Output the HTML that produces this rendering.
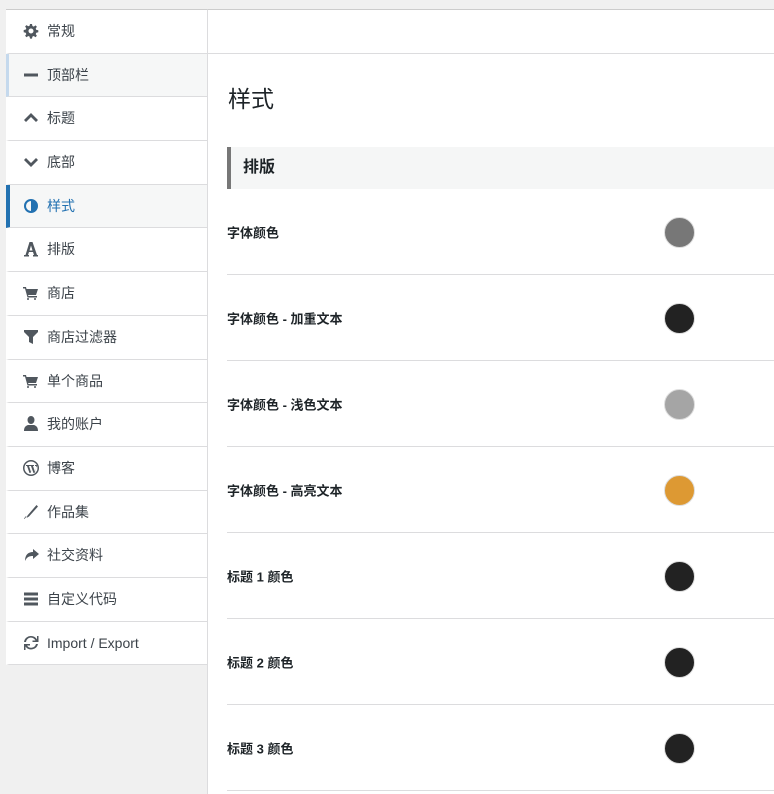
<!DOCTYPE html>
<html><head><meta charset="utf-8"><style>
*{box-sizing:border-box;margin:0;padding:0}
body{width:774px;height:794px;background:#f0f0f0;font-family:"Liberation Sans","Noto Sans CJK SC",sans-serif;position:relative;overflow:hidden}
#side{position:absolute;left:6px;top:9px;width:201px;border:1px solid #ccc;border-right:none;border-bottom:none;background:#f0f0f0}
.it{height:43.7px;background:#fff;border-bottom:1px solid #dcdcde;position:relative;font-size:14px;color:#3c434a;line-height:43px;padding-left:38px;border-left:3px solid transparent;margin-left:-1px}
.it svg{position:absolute;left:14px;top:13px;width:16px;height:16px;fill:#50575e}
.it.hov{background:#f6f7f7;border-left-color:#c5d9ed}
.it.act{background:#f6f7f7;border-left:4px solid #2271b1;color:#2271b1;padding-left:37px}
.it.act svg{fill:#2271b1;left:13px}
#main{position:absolute;left:207px;top:9px;width:567px;height:785px;background:#fff;border-left:1px solid #dcdcde;border-top:1px solid #ccc}
#top{height:44px;border-bottom:1px solid #dcdcde}
h1{font-weight:normal;font-size:23px;color:#1d2327;position:absolute;left:20px;top:70px}
#sec{position:absolute;left:19px;top:137px;right:0;height:42px;background:#f5f6f6;border-left:4px solid #777;font-size:16px;font-weight:bold;color:#1d2327;padding-left:12px;line-height:42px}
.row{position:absolute;left:19px;right:0;height:86px;border-bottom:1px solid #dcdcde;font-size:13px;font-weight:bold;color:#1d2327}
.row span{position:absolute;left:0;top:50%;transform:translateY(-50%)}
.row i{position:absolute;left:437px;top:50%;margin-top:-15px;width:31px;height:31px;border-radius:50%;border:1px solid #ddd}
</style></head><body>
<div id="side">
<div class="it"><svg viewBox="0 0 16 16"><path d="M7 1h2l.4 2 1.4.6 1.7-1.2 1.4 1.4-1.2 1.7.6 1.4 2 .4v2l-2 .4-.6 1.4 1.2 1.7-1.4 1.4-1.7-1.2-1.4.6-.4 2H7l-.4-2-1.4-.6-1.7 1.2-1.4-1.4 1.2-1.7-.6-1.4-2-.4V7l2-.4.6-1.4-1.2-1.7 1.4-1.4 1.7 1.2 1.4-.6zM8 5.5a2.5 2.5 0 100 5 2.5 2.5 0 000-5z"/></svg>常规</div>
<div class="it hov"><svg viewBox="0 0 16 16"><rect x="1" y="6.5" width="14" height="3"/></svg>顶部栏</div>
<div class="it"><svg viewBox="0 0 16 16"><path d="M8 3l7 7-2 2-5-5-5 5-2-2z"/></svg>标题</div>
<div class="it"><svg viewBox="0 0 16 16"><path d="M8 13l7-7-2-2-5 5-5-5-2 2z"/></svg>底部</div>
<div class="it act"><svg viewBox="0 0 16 16"><path d="M8 1a7 7 0 100 14A7 7 0 008 1zm0 2v10a5 5 0 010-10z"/></svg>样式</div>
<div class="it"><svg viewBox="0 0 16 16"><path d="M6.5 1h3l4.5 13H15v1.5h-5V14h1l-1-3H6l-1 3h1v1.5H1V14h1.5zM8 4.5l-1.5 5h3z"/></svg>排版</div>
<div class="it"><svg viewBox="0 0 16 16"><path d="M0 2h3l.5 2H15l-2 6H5l.5 1H14v1.5H4.5L2 3.5H0zM5 13a1 1 0 110 2 1 1 0 010-2zm7 0a1 1 0 110 2 1 1 0 010-2z"/></svg>商店</div>
<div class="it"><svg viewBox="0 0 16 16"><path d="M1 1h14v2l-5 5v7l-4-2V8L1 3z"/></svg>商店过滤器</div>
<div class="it"><svg viewBox="0 0 16 16"><path d="M0 2h3l.5 2H15l-2 6H5l.5 1H14v1.5H4.5L2 3.5H0zM5 13a1 1 0 110 2 1 1 0 010-2zm7 0a1 1 0 110 2 1 1 0 010-2z"/></svg>单个商品</div>
<div class="it"><svg viewBox="0 0 16 16"><path d="M8 0a3.5 4 0 110 8 3.5 4 0 010-8zM5 9h6c3 1 4 3 4 6H1c0-3 1-5 4-6z"/></svg>我的账户</div>
<div class="it"><svg viewBox="0 0 16 16"><path d="M8 0a8 8 0 100 16A8 8 0 008 0zm0 1.5a6.5 6.5 0 110 13 6.5 6.5 0 010-13zM3 5h4v1H6l2 6 1-3-1-3H7V5h4v1h-1l2 6 1.5-4.5-.5-1.5H12V5h2v1l-2.5 7h-1L9 9l-1.5 4h-1L4 6H3z"/></svg>博客</div>
<div class="it"><svg viewBox="0 0 16 16"><path d="M13.5 1l1.5 1.5-9 10-2.5 1.5 1-2.5zM3.5 12.5L1.5 15 1 14.5 3 12z"/></svg>作品集</div>
<div class="it"><svg viewBox="0 0 16 16"><path d="M10 2l6 5-6 5V9c-4 0-6 1-8 5 0-6 3-9 8-9z"/></svg>社交资料</div>
<div class="it"><svg viewBox="0 0 16 16"><rect x="1" y="1.5" width="14" height="3"/><rect x="1" y="6.5" width="14" height="3"/><rect x="1" y="11.5" width="14" height="3"/></svg>自定义代码</div>
<div class="it"><svg viewBox="0 0 16 16"><path d="M8 1a7 7 0 016 3.5V1h1.5v6h-6V5.5h3A5 5 0 003 7H1a7 7 0 017-6zM1 9h6v1.5H4a5 5 0 009-1.5h2a7 7 0 01-12.5 2.5V15H1z"/></svg>Import / Export</div>
</div>
<div id="main">
<div id="top"></div>
<h1>样式</h1>
<div id="sec">排版</div>
<div class="row" style="top:179px"><span>字体颜色</span><i style="background:#777"></i></div>
<div class="row" style="top:265px"><span>字体颜色 - 加重文本</span><i style="background:#222"></i></div>
<div class="row" style="top:351px"><span>字体颜色 - 浅色文本</span><i style="background:#a5a5a5"></i></div>
<div class="row" style="top:437px"><span>字体颜色 - 高亮文本</span><i style="background:#dd9933"></i></div>
<div class="row" style="top:523px"><span>标题 1 颜色</span><i style="background:#222"></i></div>
<div class="row" style="top:609px"><span>标题 2 颜色</span><i style="background:#222"></i></div>
<div class="row" style="top:695px"><span>标题 3 颜色</span><i style="background:#222"></i></div>
</div>
</body></html>
